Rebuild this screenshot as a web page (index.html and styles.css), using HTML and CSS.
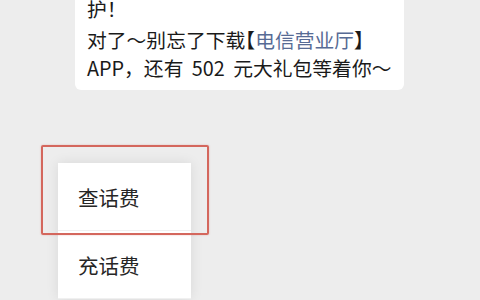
FILE: index.html
```html
<!DOCTYPE html>
<html lang="zh-CN">
<head>
<meta charset="utf-8">
<link rel="stylesheet" href="styles.css">
</head>
<body>
<div class="screen">
  <div class="chat">
    <div class="bubble">
      <p class="line first">护！</p>
      <p class="line">对了～别忘了下载<span class="half">【</span><span class="link">电信营业厅</span><span class="half">】</span></p>
      <p class="line">APP，还有 502 元大礼包等着你～</p>
    </div>
  </div>
  <div class="menu">
    <div class="item">查话费</div>
    <div class="item">充话费</div>
  </div>
  <div class="highlight"></div>
</div>
</body>
</html>
```
FILE: styles.css
```css
html, body {
  margin: 0;
  padding: 0;
}
body {
  background: #ededed;
  font-family: "Noto Sans CJK SC", "Noto Sans", sans-serif;
}
.screen {
  position: relative;
  width: 480px;
  height: 300px;
  overflow: hidden;
}
.chat {
  padding-left: 75px;
}
.bubble {
  width: 329px;
  box-sizing: border-box;
  margin-top: -10px;
  padding: 7px 12px 8px 12px;
  background: #ffffff;
  border-radius: 6px;
}
.line {
  margin: 0;
  font-size: 19.8px;
  line-height: 28px;
  color: #1a1a1a;
  white-space: nowrap;
  word-spacing: 4px;
}
.line.first {
  line-height: 24px;
  margin-bottom: 5px;
}
.half {
  font-feature-settings: "halt";
}
.link {
  color: #576b95;
}
.menu {
  margin-top: 73px;
  margin-left: 58px;
  width: 133px;
  background: #ffffff;
  box-shadow: 0 0 12px rgba(0, 0, 0, 0.09);
}
.item {
  height: 68px;
  box-sizing: border-box;
  padding-left: 20px;
  display: flex;
  align-items: center;
  font-size: 20.5px;
  color: #262626;
  border-bottom: 1px solid #f0f0f0;
}
.highlight {
  position: absolute;
  left: 41px;
  top: 145px;
  width: 168px;
  height: 90px;
  box-sizing: border-box;
  border: 2px solid #d4675d;
  border-radius: 2px;
  box-shadow: 0 0 2px rgba(212, 103, 93, 0.4);
}
```
